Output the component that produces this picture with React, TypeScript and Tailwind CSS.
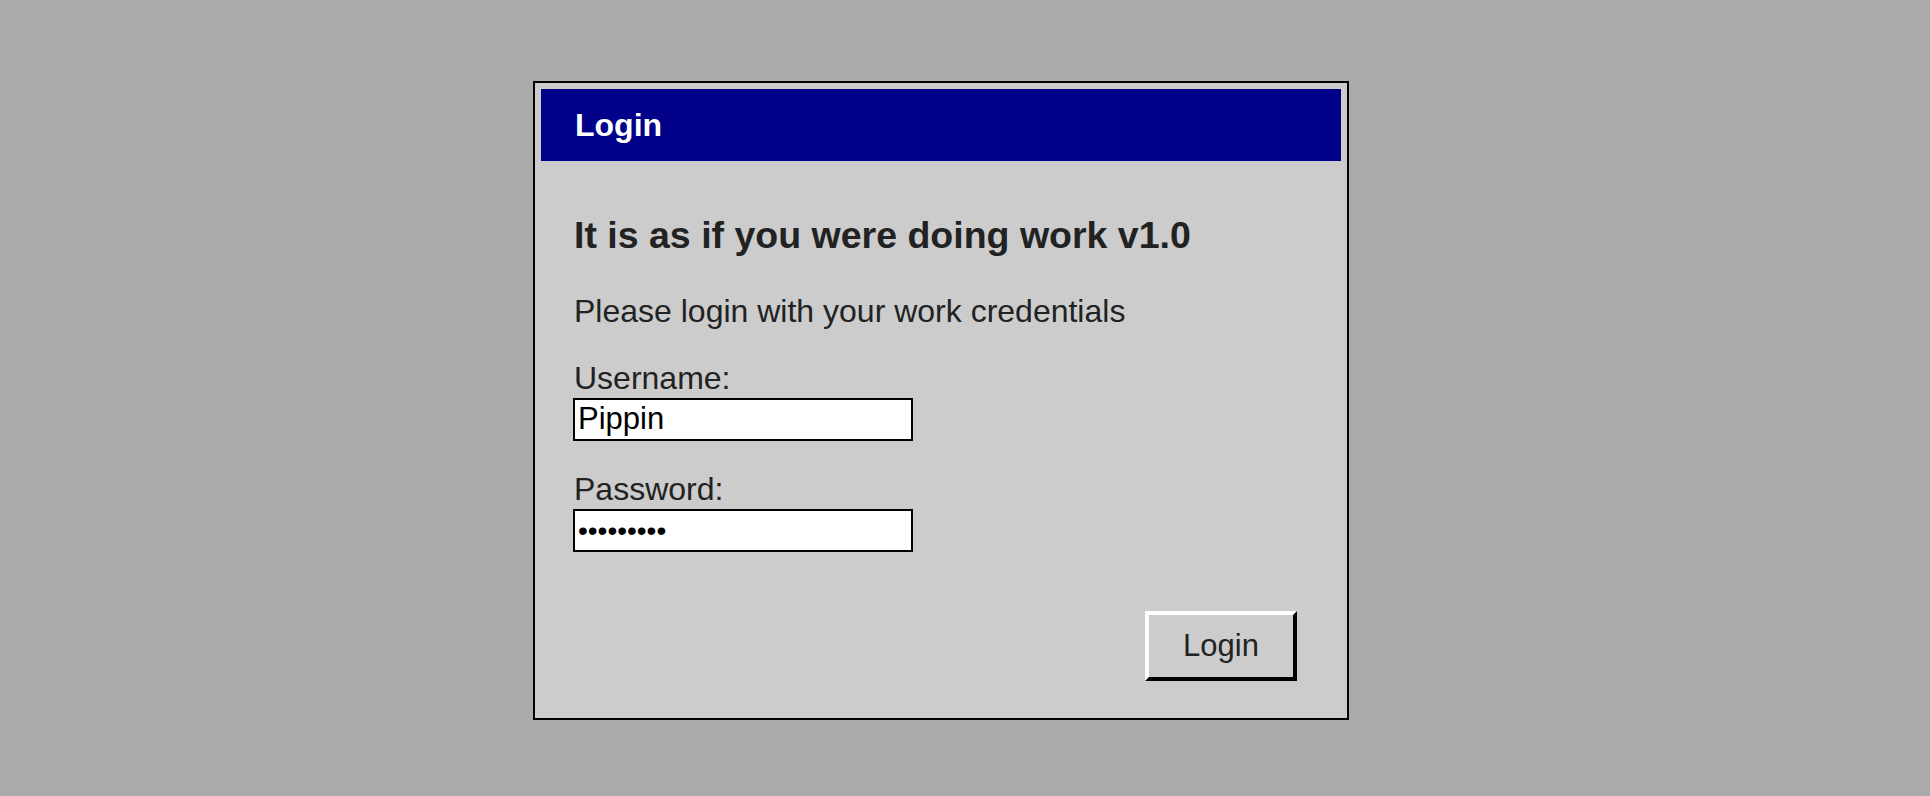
import React from "react";

export default function App() {
  const font = { fontFamily: '"Liberation Sans", Arial, Helvetica, sans-serif' };
  return (
    <div
      className="w-full h-[796px] bg-[#aaaaaa] pl-[533px] pt-[81px] overflow-hidden"
      style={font}
    >
      <div className="w-[816px] border-2 border-black bg-[#cccccc] p-[6px]">
        <div className="h-[72px] bg-[#000088] pl-[34px] flex items-center">
          <span className="text-[32px] leading-none font-bold text-white">Login</span>
        </div>
        <div className="pl-[33px] pr-[44px] pt-[56px] pb-[31px] text-[#222222]">
          <h1 className="text-[37.5px] leading-[37px] font-bold">It is as if you were doing work v1.0</h1>
          <p className="mt-[41px] text-[32px] leading-[32px]">Please login with your work credentials</p>
          <label className="block mt-[35px] text-[32px] leading-[32px]">Username:</label>
          <input
            type="text"
            readOnly
            value="Pippin"
            className="block mt-[4px] ml-[-1px] w-[340px] h-[43px] border-2 border-black bg-white px-[3px] text-[31px] text-black outline-none"
            style={font}
          />
          <label className="block mt-[32px] text-[32px] leading-[32px]">Password:</label>
          <input
            type="password"
            readOnly
            value="aaaaaaaaa"
            className="block mt-[4px] ml-[-1px] w-[340px] h-[43px] border-2 border-black bg-white px-[3px] text-[28px] text-black outline-none"
            style={font}
          />
          <div className="flex justify-end mt-[59px]">
            <button
              className="w-[152px] h-[70px] bg-[#cccccc] border-4 border-solid border-t-white border-l-white border-b-black border-r-black text-[31px] text-[#222222] flex items-center justify-center"
              style={font}
            >
              Login
            </button>
          </div>
        </div>
      </div>
    </div>
  );
}
